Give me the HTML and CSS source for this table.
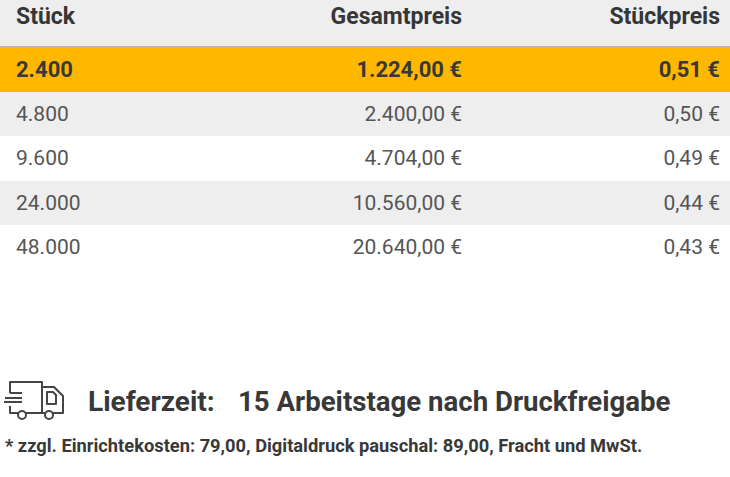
FILE: index.html
```html
<!DOCTYPE html>
<html lang="de">
<head>
<meta charset="utf-8">
<title>Staffelpreise</title>
<link rel="stylesheet" href="styles.css">
</head>
<body>
<div class="prices">
  <div class="row head">
    <div class="cell qty">Stück</div>
    <div class="cell total">Gesamtpreis</div>
    <div class="cell unit">Stückpreis</div>
  </div>
  <div class="row active">
    <div class="cell qty">2.400</div>
    <div class="cell total">1.224,00 €</div>
    <div class="cell unit">0,51 €</div>
  </div>
  <div class="row odd">
    <div class="cell qty">4.800</div>
    <div class="cell total">2.400,00 €</div>
    <div class="cell unit">0,50 €</div>
  </div>
  <div class="row even">
    <div class="cell qty">9.600</div>
    <div class="cell total">4.704,00 €</div>
    <div class="cell unit">0,49 €</div>
  </div>
  <div class="row odd">
    <div class="cell qty">24.000</div>
    <div class="cell total">10.560,00 €</div>
    <div class="cell unit">0,44 €</div>
  </div>
  <div class="row even">
    <div class="cell qty">48.000</div>
    <div class="cell total">20.640,00 €</div>
    <div class="cell unit">0,43 €</div>
  </div>
</div>

<div class="delivery">
  <svg class="truck" width="66" height="46" viewBox="0 0 66 46" fill="none" stroke="#454545" stroke-width="2" stroke-linecap="butt" stroke-linejoin="round">
    <path d="M10 16 V5 H42 V36"/>
    <path d="M42 10 H54 L63 19 V36 H53"/>
    <path d="M47 15 H53 L56 18 V27 H47 Z"/>
    <path d="M10 16 H22"/>
    <path d="M5 21 H22"/>
    <path d="M4 25 H22"/>
    <path d="M10 29 V36 H18"/>
    <path d="M26 36 H45"/>
    <circle cx="22" cy="38" r="4"/>
    <circle cx="49" cy="38" r="4"/>
  </svg>
  <span class="label">Lieferzeit:</span>
  <span class="value">15 Arbeitstage nach Druckfreigabe</span>
</div>
<p class="note">* zzgl. Einrichtekosten: 79,00, Digitaldruck pauschal: 89,00, Fracht und MwSt.</p>
</body>
</html>
```

FILE: styles.css
```css
html, body {
  margin: 0;
  padding: 0;
  background: #ffffff;
}
body {
  font-family: Roboto, "Noto Sans", sans-serif;
  color: #3a3a3a;
  width: 730px;
}
.prices {
  display: grid;
}
.row {
  display: grid;
  grid-template-columns: 230px 242px 1fr;
  align-items: center;
  height: 44.5px;
  font-size: 21px;
  color: #555555;
}
.cell.qty {
  padding-left: 16px;
}
.cell.total,
.cell.unit {
  text-align: right;
  padding-right: 10px;
}
.row.head {
  height: 46px;
  background: #eeeeee;
  border-bottom: 1px solid #b4b4b4;
  align-items: start;
  font-size: 23px;
  font-weight: 700;
  color: #363636;
}
.row.head .cell {
  padding-top: 4px;
  line-height: 26px;
}
.row.active {
  background: #ffb800;
  font-weight: 700;
  color: #383838;
  font-size: 22px;
}
.row.odd {
  background: #eeeeee;
}
.row.even {
  background: #ffffff;
}
.delivery {
  display: flex;
  align-items: center;
  margin-top: 107px;
  height: 46px;
  font-size: 28px;
  font-weight: 700;
  color: #383838;
}
.truck {
  flex: none;
  display: block;
}
.label {
  margin-left: 22px;
  width: 150px;
  padding-top: 4px;
}
.value {
  padding-top: 4px;
  font-size: 27.6px;
}
.note {
  margin: 12px 0 0 5px;
  font-size: 18.3px;
  font-weight: 700;
  color: #383838;
  line-height: 22px;
}
```
